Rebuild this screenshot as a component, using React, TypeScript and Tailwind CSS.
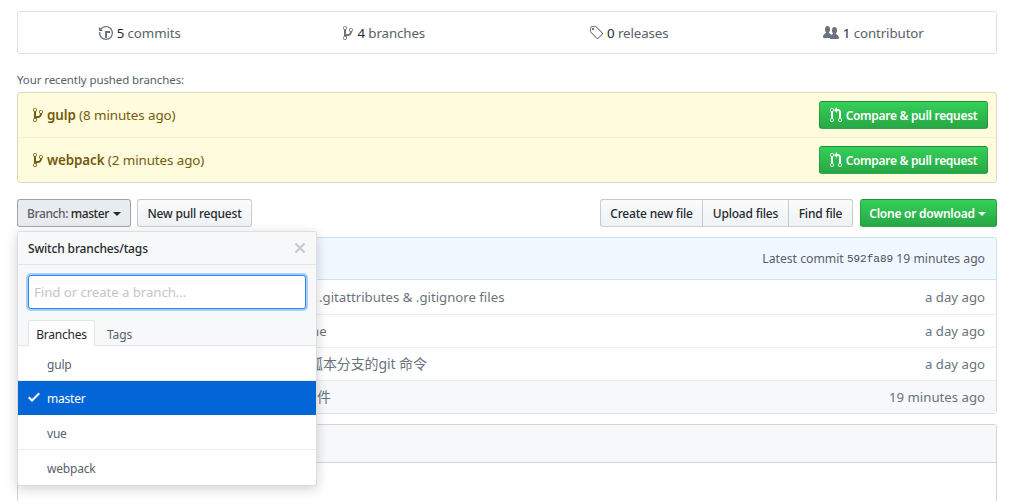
const Ico = ({ d, w, h = 16, c = "" }: { d: string; w: number; h?: number; c?: string }) => (
  <svg viewBox={`0 0 ${w} 16`} width={w} height={h} className={`shrink-0 fill-current ${c}`}>
    <path fillRule="evenodd" d={d} />
  </svg>
);

const branch = "M10 5c0-1.11-.89-2-2-2a1.993 1.993 0 0 0-1 3.72v.3c-.02.52-.23.98-.63 1.38-.4.4-.86.61-1.38.63-.83.02-1.48.16-2 .45V4.72a1.993 1.993 0 0 0-1-3.72C.88 1 0 1.89 0 3a2 2 0 0 0 1 1.72v6.56c-.59.35-1 .99-1 1.72 0 1.11.89 2 2 2 1.11 0 2-.89 2-2 0-.53-.2-1-.53-1.36.09-.06.48-.41.59-.47.25-.11.56-.17.94-.17 1.05-.05 1.95-.45 2.75-1.25S8.95 7.77 9 6.73h-.02C9.59 6.37 10 5.73 10 5zM2 1.8c.66 0 1.2.55 1.2 1.2 0 .65-.55 1.2-1.2 1.2C1.35 4.2.8 3.65.8 3c0-.65.55-1.2 1.2-1.2zm0 12.41c-.66 0-1.2-.55-1.2-1.2 0-.65.55-1.2 1.2-1.2.65 0 1.2.55 1.2 1.2 0 .65-.55 1.2-1.2 1.2zm6-8c-.66 0-1.2-.55-1.2-1.2 0-.65.55-1.2 1.2-1.2.65 0 1.2.55 1.2 1.2 0 .65-.55 1.2-1.2 1.2z";
const history = "M8 13H6V6h5v2H8v5zM7 1C4.81 1 2.87 2.02 1.59 3.59L0 2v4h4L2.5 4.5C3.55 3.17 5.17 2.3 7 2.3c3.14 0 5.7 2.56 5.7 5.7s-2.56 5.7-5.7 5.7A5.71 5.71 0 0 1 1.3 8c0-.34.03-.67.09-1H.08C.03 7.33 0 7.66 0 8c0 3.86 3.14 7 7 7s7-3.14 7-7-3.14-7-7-7z";
const tag = "M7.73 1.73C7.26 1.26 6.62 1 5.96 1H3.5C2.13 1 1 2.13 1 3.5v2.47c0 .66.27 1.3.73 1.77l6.06 6.06c.39.39 1.02.39 1.41 0l4.59-4.59a.996.996 0 0 0 0-1.41L7.73 1.73zM2.38 7.09c-.31-.3-.47-.7-.47-1.13V3.5c0-.88.72-1.59 1.59-1.59h2.47c.42 0 .83.16 1.13.47l6.14 6.13-4.73 4.73-6.13-6.15zM3.01 3h2v2H3V3h.01z";
const org = "M16 12.999c0 .439-.45 1-1 1H7.995c-.539 0-.994-.447-.995-.999H1c-.54 0-1-.561-1-1 0-2.634 3-4 3-4s.229-.409 0-1c-.841-.621-1.058-.59-1-3 .058-2.419 1.367-3 2.5-3s2.442.58 2.5 3c.058 2.41-.159 2.379-1 3-.229.59 0 1 0 1s1.549.711 2.42 2.088C9.196 9.369 10 8.999 10 8.999s.229-.409 0-1c-.841-.62-1.058-.59-1-3 .058-2.419 1.367-3 2.5-3s2.437.581 2.495 3c.059 2.41-.158 2.38-1 3-.229.59 0 1 0 1s3.005 1.366 3.005 4z";
const pr = "M11 11.28V5c-.03-.78-.34-1.47-.94-2.06C9.46 2.35 8.78 2.03 8 2H7V0L4 3l3 3V4h1c.27.02.48.11.69.31.21.2.3.42.31.69v6.28A1.993 1.993 0 0 0 10 15a1.993 1.993 0 0 0 1-3.72zm-1 2.92c-.66 0-1.2-.55-1.2-1.2 0-.65.55-1.2 1.2-1.2.65 0 1.2.55 1.2 1.2 0 .65-.55 1.2-1.2 1.2zM4 3c0-1.11-.89-2-2-2a1.993 1.993 0 0 0-1 3.72v6.56A1.993 1.993 0 0 0 2 15a1.993 1.993 0 0 0 1-3.72V4.72c.59-.34 1-.98 1-1.72zm-.8 10c0 .66-.55 1.2-1.2 1.2-.65 0-1.2-.55-1.2-1.2 0-.65.55-1.2 1.2-1.2.65 0 1.2.55 1.2 1.2zM2 4.2C1.34 4.2.8 3.65.8 3c0-.65.55-1.2 1.2-1.2.65 0 1.2.55 1.2 1.2 0 .65-.55 1.2-1.2 1.2z";
const check = "M12 5l-8 8-4-4 1.5-1.5L4 10l6.5-6.5L12 5z";
const x = "M7.48 8l3.75 3.75-1.48 1.48L6 9.48l-3.75 3.75-1.48-1.48L4.52 8 .77 4.25l1.48-1.48L6 6.52l3.75-3.75 1.48 1.48L7.48 8z";

const Stat = ({ d, w, n, label }: { d: string; w: number; n: string; label: string }) => (
  <div className="flex items-center justify-center gap-[4px] pr-[1px] text-[13.3px] tracking-[-0.1px] text-[#586069]">
    <Ico d={d} w={w} c="text-[#6a737d]" />
    <span className="mt-[2px]"><span className="text-[#24292e]">{n}</span> {label}</span>
  </div>
);

const Pushed = ({ name, time, last }: { name: string; time: string; last?: boolean }) => (
  <div className={`flex items-center justify-between pl-[15px] pr-[8px] ${last ? "h-[44px]" : "h-[45px] border-b border-[#f5efd3]"}`}>
    <div className="flex items-center gap-[4px] pt-[1px] text-[13.4px] tracking-[-0.1px] text-[#735c0f]">
      <Ico d={branch} w={10} />
      <span><b className="font-semibold">{name}</b> ({time})</span>
    </div>
    <button className="flex h-[28px] w-[169px] items-center justify-center gap-[4px] rounded-[3px] border border-[#1b1f2333] bg-gradient-to-b from-[#34d058] to-[#28a745] pt-[2px] text-[12px] font-semibold tracking-[-0.3px] text-white">
      <Ico d={pr} w={12} c="-mt-[2px]" />
      Compare &amp; pull request
    </button>
  </div>
);

const Row = ({ pad, text, time, alt, first, cjk }: { pad: string; text: string; time: string; alt?: boolean; first?: boolean; cjk?: boolean }) => (
  <div className={`flex items-center justify-between pr-[11px] pt-[2px] text-[13.2px] text-[#6a737d] ${first ? "h-[35px] border-b border-[#eaecef]" : alt ? "h-[32px] bg-[#f6f8fa]" : "h-[33px] border-b border-[#eaecef]"} ${pad}`}>
    <span className={cjk ? "-mt-[4px] text-[14px] tracking-[-0.1px]" : ""}>{text}</span>
    <span>{time}</span>
  </div>
);

const Item = ({ name, sel, last }: { name: string; sel?: boolean; last?: boolean }) => (
  <div className={`flex items-center gap-[7px] pl-[10px] text-[12px] tracking-[-0.2px] ${sel ? "h-[34px] bg-[#0366d6] pt-[2px] text-white" : `h-[35px] pt-[3px] text-[#586069] ${last ? "" : "border-b border-[#eaecef]"}`}`}>
    <span className={`w-[12px] ${sel ? "-mt-[4px]" : ""}`}>{sel && <Ico d={check} w={12} />}</span>
    {name}
  </div>
);

const ghBtn = "flex h-[28px] items-center justify-center border border-[#1b1f2333] bg-gradient-to-b from-[#fafbfc] to-[#eff3f6] pt-[2px] text-[12px] font-medium tracking-[-0.2px] text-[#24292e]";

export default function App() {
  return (
    <div className="h-[501px] w-[1014px] overflow-hidden bg-white px-[17px] pt-[11px] font-['Noto_Sans','Noto_Sans_CJK_SC',sans-serif]">
      <div className="grid h-[43px] grid-cols-4 rounded-[3px] border border-[#dfe2e5]">
        <Stat d={history} w={14} n="5" label="commits" />
        <Stat d={branch} w={10} n="4" label="branches" />
        <Stat d={tag} w={14} n="0" label="releases" />
        <Stat d={org} w={16} n="1" label="contributor" />
      </div>

      <div className="mt-[16px] h-[20px] text-[11.5px] leading-[20px] tracking-[-0.1px] text-[#586069]">Your recently pushed branches:</div>

      <div className="mt-[2px] h-[91px] rounded-[3px] border border-[#dfd8c2] bg-[#fffbdd]">
        <Pushed name="gulp" time="8 minutes ago" />
        <Pushed name="webpack" time="2 minutes ago" last />
      </div>

      <div className="mt-[16px] flex h-[28px] justify-between">
        <div className="flex gap-[6px]">
          <div className="relative z-10">
            <button className="flex h-[28px] w-[114px] items-center justify-center gap-[4px] rounded-[3px] border border-[#1b1f2359] bg-[#e9ecef] pt-[2px] text-[12px] font-medium tracking-[-0.4px] text-[#24292e]">
              <span><span className="text-[#586069]">Branch:</span> master</span>
              <span className="border-x-[4px] border-t-[4px] border-x-transparent border-t-[#24292e]" />
            </button>
            <div className="absolute left-0 top-[32px] w-[300px] overflow-hidden rounded-[3px] border border-[#1b1f2326] bg-white shadow-[0_3px_12px_rgba(27,31,35,0.2)]">
              <div className="flex h-[33px] items-center justify-between border-b border-[#e1e4e8] bg-[#f6f8fa] px-[10px] pt-[2px] text-[12px] font-medium tracking-[-0.15px] text-[#24292e]">
                Switch branches/tags
                <Ico d={x} w={12} c="-mt-[2px] text-[#c5c9cd]" />
              </div>
              <div className="h-[81px] border-b border-[#e1e4e8] bg-[#f6f8fa] px-[10px] pt-[10px]">
                <input
                  readOnly
                  placeholder="Find or create a branch..."
                  className="h-[34px] w-[278px] rounded-[3px] border border-[#2188ff] bg-white px-[5px] text-[13.3px] tracking-[-0.1px] shadow-[0_0_0_2px_rgba(3,102,214,0.3)] outline-none placeholder:text-[#c1c6cb]"
                />
                <div className="mt-[11px] flex items-end">
                  <div className="flex h-[26px] w-[67px] items-center justify-center rounded-t-[3px] border-x border-t border-[#e1e4e8] bg-white pt-[3px] text-[12px] tracking-[-0.25px] text-[#24292e]">Branches</div>
                  <div className="flex h-[26px] items-center pl-[12px] pt-[3px] text-[12px] tracking-[-0.1px] text-[#586069]">Tags</div>
                </div>
              </div>
              <Item name="gulp" />
              <Item name="master" sel />
              <Item name="vue" />
              <Item name="webpack" last />
            </div>
          </div>
          <button className={`${ghBtn} w-[115px] rounded-[3px]`}>New pull request</button>
        </div>
        <div className="flex gap-[7px]">
          <div className="flex">
            <button className={`${ghBtn} w-[103px] rounded-l-[3px]`}>Create new file</button>
            <button className={`${ghBtn} ml-[-1px] w-[87px]`}>Upload files</button>
            <button className={`${ghBtn} ml-[-1px] w-[65px] rounded-r-[3px]`}>Find file</button>
          </div>
          <button className="flex h-[28px] w-[137px] items-center justify-center gap-[3px] rounded-[3px] border border-[#1b1f2333] bg-gradient-to-b from-[#34d058] to-[#28a745] pr-[2px] pt-[2px] text-[12px] font-semibold tracking-[-0.25px] text-white">
            Clone or download
            <span className="border-x-[4px] border-t-[4px] border-x-transparent border-t-white" />
          </button>
        </div>
      </div>

      <div className="mt-[10px] flex h-[43px] items-center justify-end rounded-t-[3px] border border-[#c8e1ff] bg-[#f1f8ff] pr-[11px] pt-[2px] text-[12.2px] text-[#586069]">
        Latest commit&nbsp;<span className="font-['Liberation_Mono',monospace] text-[11px] text-[#444d56]">592fa89</span>&nbsp;19 minutes ago
      </div>
      <div className="rounded-b-[3px] border-x border-b border-[#dfe2e5]">
        <Row first pad="pl-[301px]" text=".gitattributes & .gitignore files" time="a day ago" />
        <Row pad="pl-[293px]" text="ne" time="a day ago" />
        <Row cjk pad="pl-[291px]" text="孤本分支的git 命令" time="a day ago" />
        <Row cjk alt pad="pl-[285px]" text="文件" time="19 minutes ago" />
      </div>

      <div className="mt-[10px] h-[100px] rounded-t-[3px] border-x border-t border-[#d1d5da]">
        <div className="h-[38px] border-b border-[#d1d5da] bg-[#f6f8fa]" />
      </div>
    </div>
  );
}
